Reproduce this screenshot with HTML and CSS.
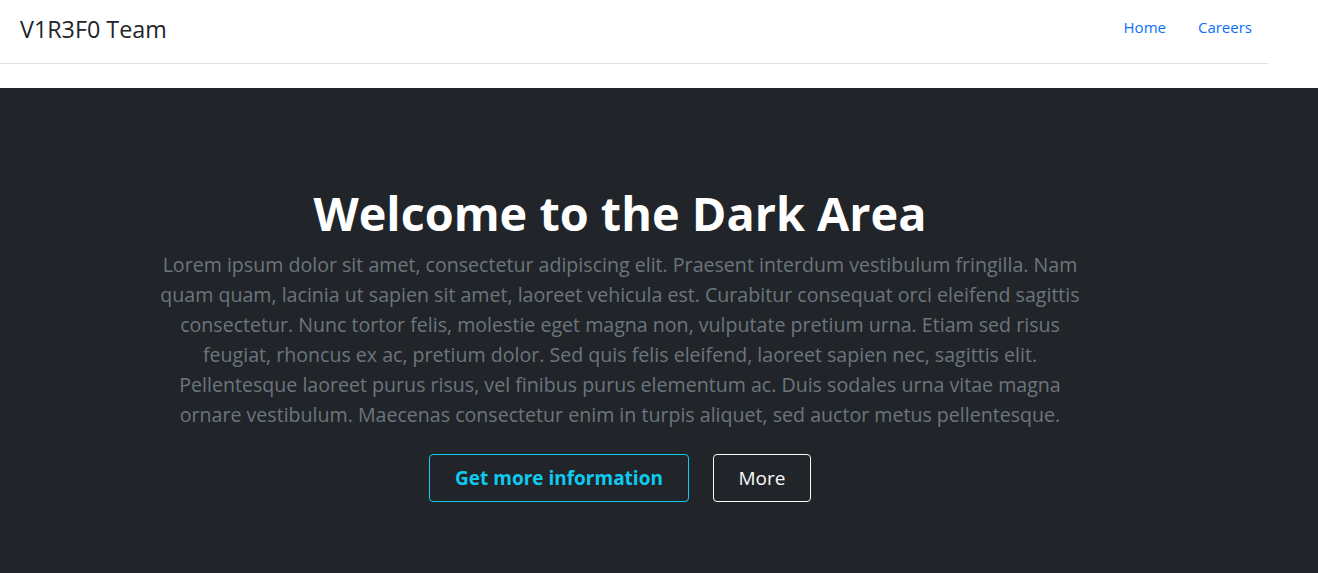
FILE: index.html
```html
<!DOCTYPE html>
<html lang="en">
<head>
    <meta charset="UTF-8">
    <meta name="viewport" content="width=device-width, initial-scale=1.0">
    <title>V1R3F0 Team</title>
    <link rel="stylesheet" href="styles.css">
</head>
<body>

    <header class="site-header">
        <a href="#" class="brand">V1R3F0 Team</a>
        <ul class="nav">
            <li><a href="#" class="nav-link">Home</a></li>
            <li><a href="#" class="nav-link">Careers</a></li>
        </ul>
    </header>

    <section class="hero">
        <div class="hero-inner">
            <h1>Welcome to the Dark Area</h1>
            <p class="lead">Lorem ipsum dolor sit amet, consectetur adipiscing elit. Praesent interdum vestibulum fringilla. Nam quam quam, lacinia ut sapien sit amet, laoreet vehicula est. Curabitur consequat orci eleifend sagittis consectetur. Nunc tortor felis, molestie eget magna non, vulputate pretium urna. Etiam sed risus feugiat, rhoncus ex ac, pretium dolor. Sed quis felis eleifend, laoreet sapien nec, sagittis elit. Pellentesque laoreet purus risus, vel finibus purus elementum ac. Duis sodales urna vitae magna ornare vestibulum. Maecenas consectetur enim in turpis aliquet, sed auctor metus pellentesque.</p>
            <div class="buttons">
                <button class="btn btn-info">Get more information</button>
                <button class="btn btn-light">More</button>
            </div>
        </div>
    </section>

</body>
</html>
```

FILE: styles.css
```css
body {
    font-family: "Open Sans", "Noto Sans", sans-serif;
    margin: 0;
    color: #212529;
    background-color: #fff;
}
.site-header {
    display: flex;
    align-items: center;
    justify-content: space-between;
    width: 1268px;
    height: 63px;
    border-bottom: 1px solid #dee2e6;
    margin-bottom: 24px;
}
.brand {
    font-size: 23.3px;
    color: #212529;
    text-decoration: none;
    padding-left: 20px;
    margin-bottom: 6px;
}
.nav {
    display: flex;
    list-style: none;
    margin: 0;
    padding: 0;
}
.nav-link {
    display: block;
    padding: 8px 16px;
    font-size: 15px;
    color: #0d6efd;
    text-decoration: none;
    margin-bottom: 9px;
}
.hero {
    background-color: #212529;
    padding: 96px 0 72px;
}
.hero-inner {
    width: 1240px;
    text-align: center;
}
.hero h1 {
    font-size: 46.8px;
    font-weight: 700;
    color: #fff;
    margin: 0 0 8px;
    line-height: 58px;
}
.lead {
    max-width: 936px;
    margin: 0 auto 24px;
    font-size: 19.6px;
    line-height: 30px;
    color: #6c757d;
}
.buttons {
    display: flex;
    justify-content: center;
    gap: 24px;
}
.btn {
    font-family: inherit;
    font-size: 19px;
    height: 48px;
    padding: 0 24px;
    border-radius: 4px;
    background: transparent;
    cursor: pointer;
}
.btn-info {
    width: 260px;
    color: #0dcaf0;
    border: 1px solid #0dcaf0;
    font-weight: 700;
}
.btn-light {
    width: 98px;
    color: #f8f9fa;
    border: 1px solid #f8f9fa;
}
```
